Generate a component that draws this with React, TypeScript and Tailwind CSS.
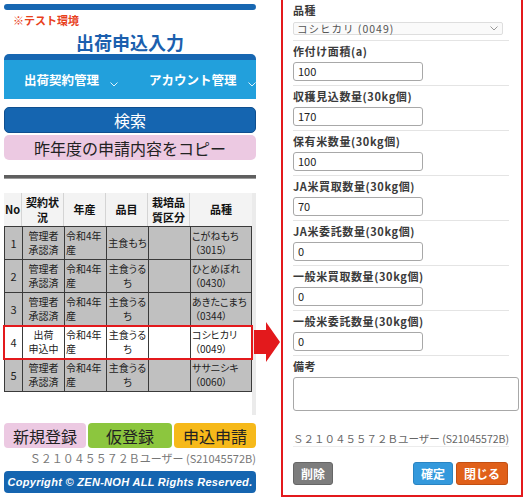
import React from 'react';

type Row = {
  no: string;
  status: [string, string];
  year: [string, string];
  item: string[];
  variety: [string, string];
  active?: boolean;
};

const rows: Row[] = [
  { no: '1', status: ['管理者', '承認済'], year: ['令和4年', '産'], item: ['主食もち'], variety: ['こがねもち', '（3015）'] },
  { no: '2', status: ['管理者', '承認済'], year: ['令和4年', '産'], item: ['主食うる', 'ち'], variety: ['ひとめぼれ', '（0430）'] },
  { no: '3', status: ['管理者', '承認済'], year: ['令和4年', '産'], item: ['主食うる', 'ち'], variety: ['あきたこまち', '（0344）'] },
  { no: '4', status: ['出荷', '申込中'], year: ['令和4年', '産'], item: ['主食うる', 'ち'], variety: ['コシヒカリ', '（0049）'], active: true },
  { no: '5', status: ['管理者', '承認済'], year: ['令和4年', '産'], item: ['主食うる', 'ち'], variety: ['ササニシキ', '（0060）'] },
];

const fields = [
  { label: '作付け面積(a)', value: '100' },
  { label: '収穫見込数量(30kg個)', value: '170' },
  { label: '保有米数量(30kg個)', value: '100' },
  { label: 'JA米買取数量(30kg個)', value: '70' },
  { label: 'JA米委託数量(30kg個)', value: '0' },
  { label: '一般米買取数量(30kg個)', value: '0' },
  { label: '一般米委託数量(30kg個)', value: '0' },
];

const cols = 'grid grid-cols-[18px_42px_42px_42px_42px_62px]';

const Chevron = ({ color }: { color: string }) => (
  <svg width="8" height="5" viewBox="0 0 8 5" fill="none">
    <polyline points="0.5,0.5 4,4 7.5,0.5" stroke={color} strokeWidth="1" />
  </svg>
);

const App: React.FC = () => {
  return (
    <div className="w-[528px] h-[500px] bg-white flex overflow-hidden font-['Noto_Sans_CJK_JP',sans-serif]">
      {/* Left: list screen */}
      <div className="w-[252px] ml-[4px] pt-[4px] flex flex-col shrink-0">
        <div className="h-[6px] rounded-full bg-[#1767b2]" />
        <div className="mt-[3px] h-[14px] leading-[14px] pl-[9px] text-[11px] font-bold text-[#e8401c]">※テスト環境</div>
        <div className="mt-[4px] h-[22px] leading-[22px] text-center text-[18px] font-bold text-[#1b5fae]">出荷申込入力</div>

        {/* Nav */}
        <div className="mt-[1px] h-[6px] rounded-t-[5px] bg-[#1767b2]" />
        <div className="h-[39px] bg-[#22a0dc] flex items-center text-white text-[12.5px] font-bold">
          <div className="w-[126px] pl-[20px] flex items-center gap-[11px] pt-[2px]">
            <span>出荷契約管理</span>
            <span className="mt-[8px]"><Chevron color="#dff2fb" /></span>
          </div>
          <div className="w-[126px] pl-[19px] flex items-center gap-[11px] pt-[2px]">
            <span>アカウント管理</span>
            <span className="mt-[8px]"><Chevron color="#dff2fb" /></span>
          </div>
        </div>

        <div className="mt-[8px] h-[26px] rounded-[5px] bg-[#1565b0] border border-[#0f4f8f] flex items-center justify-center text-white text-[16px]">検索</div>
        <div className="mt-[2px] h-[25px] rounded-[5px] bg-[#ecc9e2] flex items-center justify-center text-[#222] text-[16px]">昨年度の申請内容をコピー</div>

        <div className="mt-[15px] h-[4px] bg-[#5f5f5f] border-b border-[#9a9a9a]" />

        {/* Table */}
        <div className="mt-[14px] h-[222px] flex">
          <div className="w-[248px]">
            <div className={`${cols} h-[34px] bg-[#f3f3f3] border-b border-[#3a3a3a] text-[11px] font-bold leading-[15px] text-[#111]`}>
              <div className="flex items-center justify-center border-r border-[#d4d4d4]">No</div>
              <div className="flex flex-col items-center justify-center border-r border-[#d4d4d4]">
                <span>契約状</span>
                <span>況</span>
              </div>
              <div className="flex items-center justify-center border-r border-[#d4d4d4]">年産</div>
              <div className="flex items-center justify-center border-r border-[#d4d4d4]">品目</div>
              <div className="flex flex-col items-center justify-center border-r border-[#d4d4d4]">
                <span>栽培品</span>
                <span>質区分</span>
              </div>
              <div className="flex items-center justify-center">品種</div>
            </div>
            {rows.map((r) => (
              <div
                key={r.no}
                className={`${cols} h-[33px] border-b border-[#3a3a3a] text-[10px] leading-[14px] text-[#222] whitespace-nowrap [font-feature-settings:'palt'] ${
                  r.active ? 'bg-white relative z-10 outline-2 outline-[#e3191c] -outline-offset-1' : 'bg-[#c0c0c0]'
                }`}
              >
                <div className="flex items-center justify-center border-l border-[#3a3a3a] text-[11px]">{r.no}</div>
                <div className="flex flex-col items-center justify-center border-l border-[#3a3a3a] text-center">
                  <span>{r.status[0]}</span>
                  <span>{r.status[1]}</span>
                </div>
                <div className="flex flex-col justify-center pl-[1px] border-l border-[#3a3a3a]">
                  <span>{r.year[0]}</span>
                  <span>{r.year[1]}</span>
                </div>
                <div className="flex flex-col items-center justify-center border-l border-[#3a3a3a] text-center">
                  {r.item.map((t) => (
                    <span key={t}>{t}</span>
                  ))}
                </div>
                <div className="border-l border-[#3a3a3a]" />
                <div className="flex flex-col justify-center pl-[1px] border-x border-[#3a3a3a]">
                  <span>{r.variety[0]}</span>
                  <span className="pl-[3px]">{r.variety[1]}</span>
                </div>
              </div>
            ))}
          </div>
          <div className="w-[4px] bg-[#ebebeb]" />
        </div>

        {/* Bottom buttons */}
        <div className="mt-[8px] h-[25px] flex gap-[2px] text-[16px] text-[#222]">
          <div className="w-[82px] rounded-[4px] bg-[#ecc9e2] flex items-center justify-center">新規登録</div>
          <div className="w-[84px] rounded-[4px] bg-[#8cc63e] flex items-center justify-center">仮登録</div>
          <div className="w-[82px] rounded-[4px] bg-[#f6b91a] flex items-center justify-center">申込申請</div>
        </div>
        <div className="mt-[3px] h-[14px] leading-[14px] text-right text-[11px] text-[#777]">Ｓ２１０４５５７２Ｂユーザー (S21045572B)</div>
        <div className="mt-[6px] h-[22px] rounded-[4px] bg-[#1565b0] flex items-center justify-center text-white text-[11px] font-bold italic tracking-[0.3px] font-['Liberation_Sans',sans-serif]">
          Copyright © ZEN-NOH ALL Rights Reserved.
        </div>
      </div>

      {/* Arrow */}
      <div className="w-[25px] shrink-0 pt-[322px]">
        <svg width="27" height="40" viewBox="0 0 27 40" className="-ml-[2px] overflow-visible">
          <polygon points="0,8 12,8 12,0 26,20 12,40 12,32 0,32" fill="#e3191c" />
        </svg>
      </div>

      {/* Right: input form */}
      <div className="w-[242px] h-[497px] shrink-0 border-x-2 border-b-2 border-[#e3191c] pl-[10px] pr-[2px] text-[#3a3a3a]">
        <div className="mt-[1px] h-[18px] leading-[18px] text-[11px] font-bold tracking-[0.6px]">品種</div>
        <div className="mt-[3px] w-[210px] h-[13px] border border-[#dedede] rounded-[2px] bg-[#fafafa] flex items-center justify-between pl-[3px] pr-[4px] text-[10.5px] text-[#555] tracking-[1px]">
          <span className="leading-[11px]">コシヒカリ (0049)</span>
          <Chevron color="#999" />
        </div>
        <div className="mt-[5px] w-[216px] h-px bg-[#e4e4e4]" />

        {fields.map((f) => (
          <div key={f.label}>
            <div className="h-[21px] leading-[21px] text-[11px] font-bold tracking-[0.6px]">{f.label}</div>
            <div className="w-[130px] h-[19px] border border-[#a8a8a8] rounded-[3px] pl-[4px] flex items-center text-[11px] text-[#222]">{f.value}</div>
            <div className="mt-[4px] w-[216px] h-px bg-[#e4e4e4]" />
          </div>
        ))}

        <div className="h-[21px] leading-[21px] text-[11px] font-bold tracking-[0.6px]">備考</div>
        <div className="w-[226px] h-[34px] border border-[#a8a8a8] rounded-[3px] bg-white" />

        <div className="mt-[21px] w-[216px] h-[14px] leading-[14px] text-center text-[10.5px] text-[#666]">Ｓ２１０４５５７２Ｂユーザー (S21045572B)</div>
        <div className="w-[216px] h-px bg-[#ececec]" />

        <div className="mt-[15px] w-[215px] h-[23px] flex justify-between text-white text-[12px] font-bold">
          <div className="w-[40px] rounded-[3px] bg-[#7d7d7d] border border-[#666] flex items-center justify-center">削除</div>
          <div className="flex gap-[3px]">
            <div className="w-[40px] rounded-[3px] bg-[#3499dc] border border-[#2a84c2] flex items-center justify-center">確定</div>
            <div className="w-[52px] rounded-[3px] bg-[#e0601a] border border-[#c24f12] flex items-center justify-center">閉じる</div>
          </div>
        </div>
      </div>
    </div>
  );
};

export default App;
